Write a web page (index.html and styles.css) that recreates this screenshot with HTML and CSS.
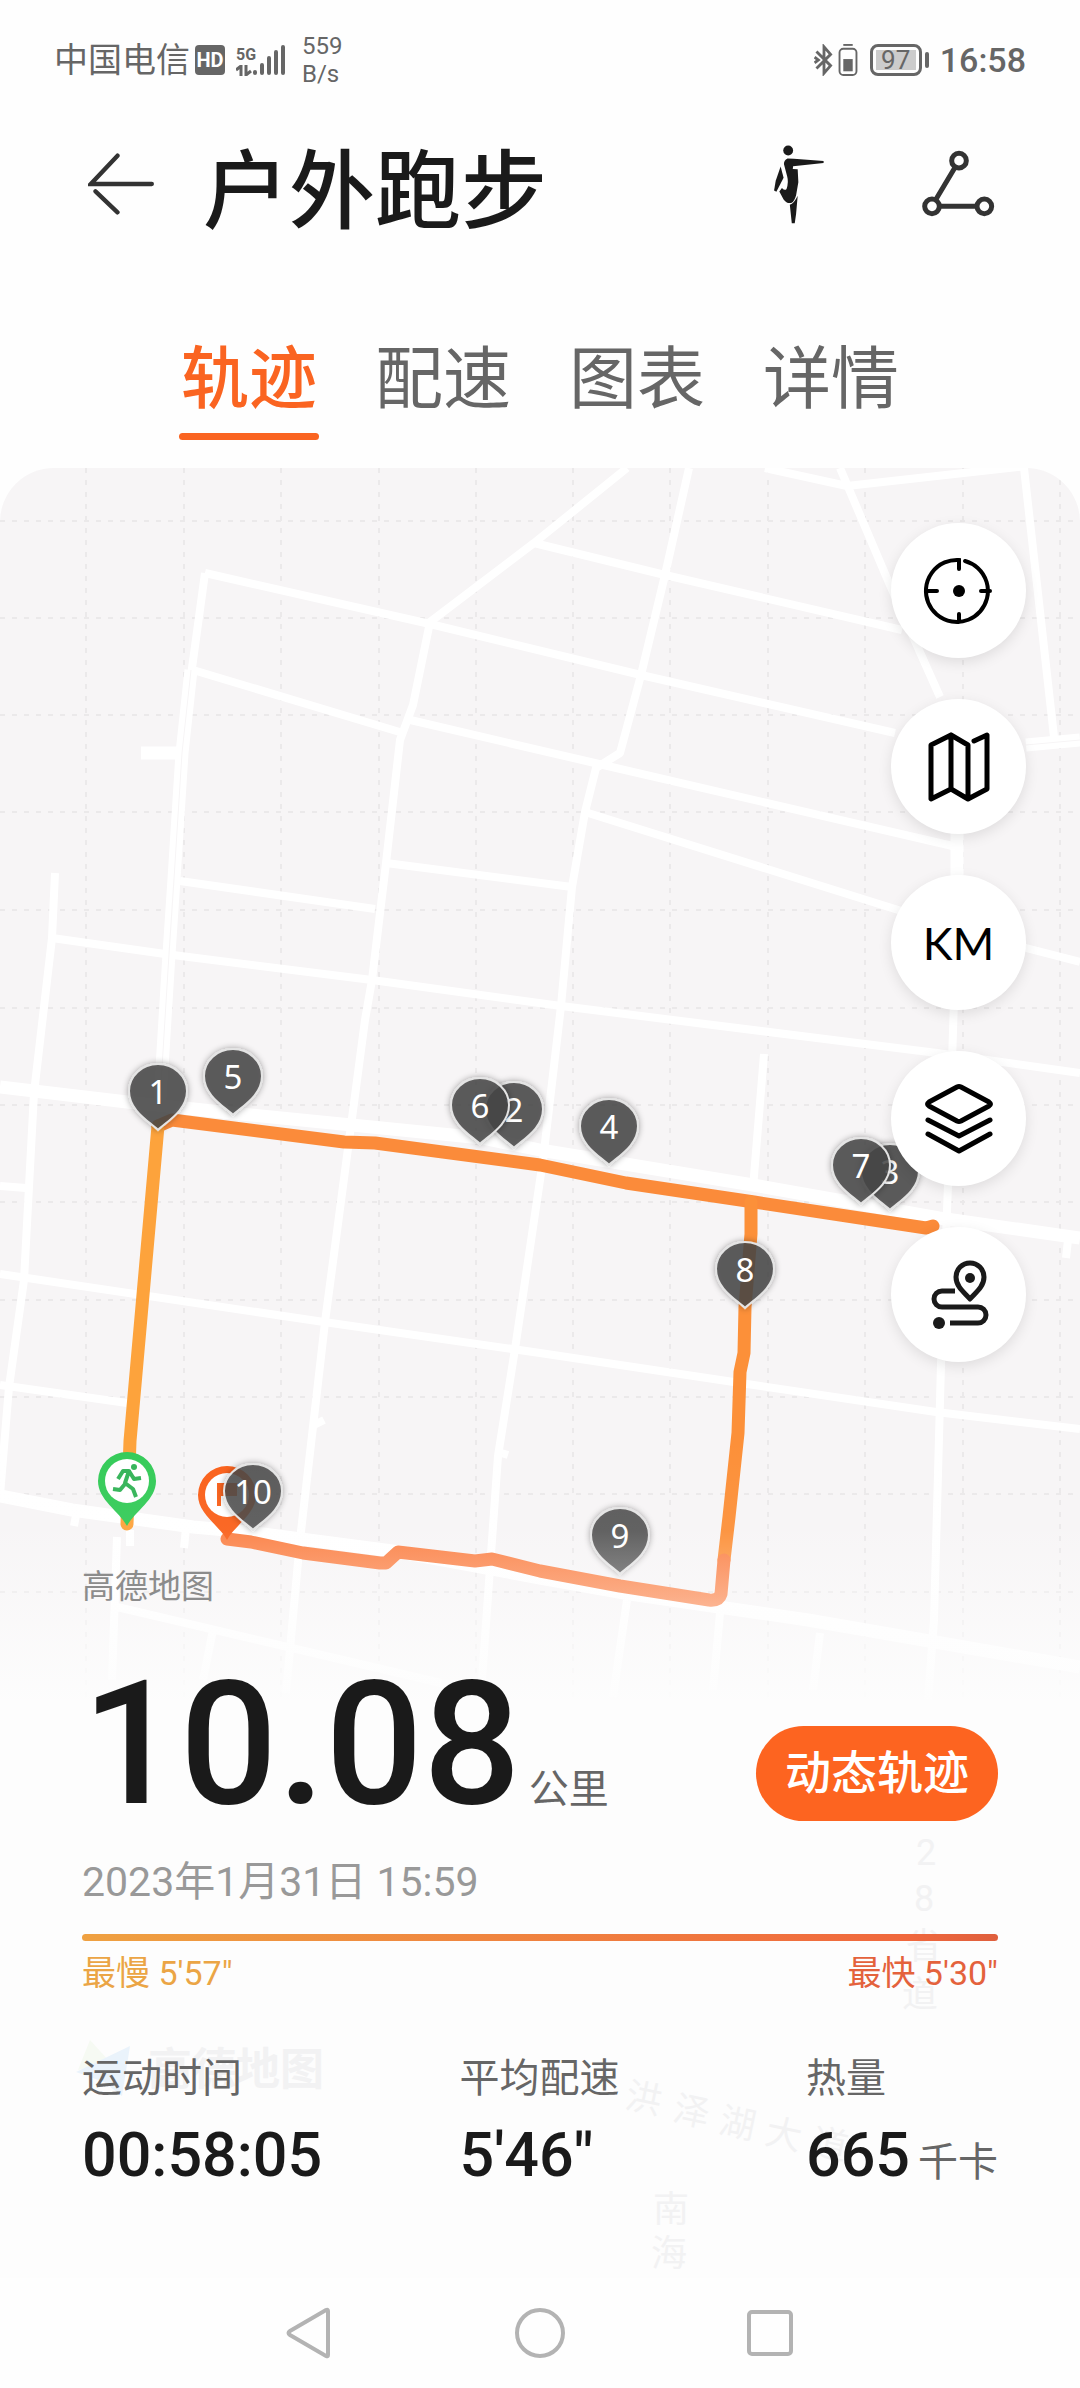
FILE: index.html
```html
<!DOCTYPE html>
<html lang="zh-CN">
<head>
    <meta charset="UTF-8">
    <meta name="viewport" content="width=device-width, initial-scale=1.0">
    <title>户外跑步</title>
    <link rel="stylesheet" href="styles.css">
</head>
<body>
    <div class="status-bar">
        <div class="status-left">
            <span class="carrier">中国电信</span>
            <span class="hd">HD</span>
            <div class="signal">
                <div class="signal-type">
                    <span>5G</span>
                    <svg width="16" height="11" viewBox="0 0 16 11" fill="none" stroke="#666" stroke-width="3"><path d="M0 5L5 1V11M10 0V10L15 6"/></svg>
                </div>
                <svg width="34" height="32" viewBox="0 0 34 32" stroke="#666" stroke-width="4" stroke-linecap="round"><path d="M3 28V29M10 21V29M17 14V29M24 8V29M31 3V29"/></svg>
            </div>
            <div class="speed">559<br>B/s</div>
        </div>
        <div class="status-right">
            <svg width="20" height="32" viewBox="0 0 20 34" fill="none" stroke="#666" stroke-width="3"><path d="M2 8L17 23L10 31V3L17 11L2 26M0 14L4 17L0 20"/></svg>
            <svg width="20" height="32" viewBox="0 0 20 34" fill="none" stroke="#666" stroke-width="2"><path d="M5 1H15"/><rect x="1" y="5" width="18" height="28" rx="4"/><path d="M5 16H15V29H5Z" fill="#666" stroke="none"/></svg>
            <div class="battery"><span>97</span></div>
            <span class="clock">16:58</span>
        </div>
    </div>

    <header class="header">
        <button class="icon-btn" aria-label="返回">
            <svg width="67" height="62" viewBox="148 400 200 186" fill="none" stroke="#333" stroke-width="13" stroke-linecap="round"><path d="M339 493H156L236 408M170 515L236 578"/></svg>
        </button>
        <h1>户外跑步</h1>
        <button class="icon-btn stretch" aria-label="拉伸">
            <svg width="54" height="82" viewBox="670 430 162 250" fill="#1a1a1a">
                <circle cx="718" cy="453" r="15"/>
                <path d="M716 477Q705 482 705 494L715 532Q720 549 713 570Q708 577 699 567L691 578L704 602Q715 617 729 612Q737 607 742 590L749 550L747 510L732 509L733 501L826 491V485L735 478Z"/>
                <path d="M695 502L704 536L682 579L675 575L680 545Z"/>
                <path d="M747 591L742 647L738 675H729L723 618Q736 615 747 591Z"/>
            </svg>
        </button>
        <button class="icon-btn" aria-label="分享">
            <svg width="76" height="68" viewBox="1100 450 224 204" fill="none" stroke="#333" stroke-width="15"><circle cx="1215" cy="482" r="22"/><circle cx="1134" cy="619" r="22"/><circle cx="1291" cy="619" r="22"/><path d="M1202 504L1146 598M1158 619H1267"/></svg>
        </button>
    </header>

    <nav class="tabs">
        <a href="#track" class="active">轨迹</a>
        <a href="#pace">配速</a>
        <a href="#chart">图表</a>
        <a href="#detail">详情</a>
    </nav>

    <main class="track" id="track">
        <svg class="map" viewBox="0 468 1080 1810" preserveAspectRatio="xMidYMin slice">
            <defs>
                <linearGradient id="fade" x1="0" y1="0" x2="0" y2="1">
                    <stop offset="0" stop-color="#fdfdfd" stop-opacity="0"/>
                    <stop offset="0.35" stop-color="#fdfdfd" stop-opacity="0.05"/>
                    <stop offset="0.6" stop-color="#fdfdfd" stop-opacity="0.35"/>
                    <stop offset="1" stop-color="#fdfdfd" stop-opacity="0.95"/>
                </linearGradient>
                <filter id="shadow" x="-30%" y="-30%" width="160%" height="160%">
                    <feDropShadow dx="0" dy="0" stdDeviation="3" flood-opacity="0.4"/>
                </filter>
                <path id="pin" d="M0 -2C-8 -10 -29 -21 -29 -41A29 27 0 0 1 29 -41C29 -21 8 -10 0 -2Z"/>
                <path id="place" d="M0 0C-8 -15 -29 -26 -29 -45A29 29 0 0 1 29 -45C29 -26 8 -15 0 0Z"/>
            </defs>

            <!-- grid -->
            <g class="grid">
                <path d="M86 468V1700M184 468V1700M281 468V1700M379 468V1700M476 468V1700M573 468V1700M670 468V1700M768 468V1700M865 468V1700M963 468V1700M1060 468V1700"/>
                <path d="M0 521H1080M0 618H1080M0 715H1080M0 812H1080M0 910H1080M0 1008H1080M0 1105H1080M0 1202H1080M0 1300H1080M0 1397H1080M0 1494H1080M0 1592H1080"/>
            </g>

            <!-- roads -->
            <g class="roads">
                <path d="M627 468L534 543L430 622L413 705L400 740L386 863L372 980L365 1020L325 1322L300 1540L286 1693"/>
                <path d="M689 468L665 575L641 675L620 753L596 768L585 812L572 887L561 1006L543 1160L515 1349L498 1456L482 1680"/>
                <path d="M205 573L430 624L641 675L895 733"/>
                <path d="M534 543L665 575L902 630"/>
                <path d="M193 670L403 733"/>
                <path d="M406 719L599 764L957 847"/>
                <path d="M585 812L895 909L1026 948L1080 962"/>
                <path d="M180 881L375 909M386 863L572 887"/>
                <path d="M55 873L52 938L34 1093L24 1280L9 1387L0 1495"/>
                <path d="M52 938L165 954L372 980L561 1006L937 1053L1080 1073"/>
                <path d="M765 468L847 486L1026 466M840 468L889 583L940 697"/>
                <path d="M1024 468L1054 737"/>
                <path d="M205 573L189 690"/>
                <path d="M954 1000L948 1185L941 1364L934 1620L926 1727"/>
                <path d="M764 1054L753 1188"/>
                <path d="M0 1186L26 1188M0 1274L324 1322L540 1353L747 1384L936 1412L1080 1429"/>
                <path d="M0 1385L127 1403"/>
                <path d="M324 1420L312 1426M498 1452L508 1455M1068 1240L1066 1258"/>
                <path d="M117 1537L112 1680M213 1630L203 1680M117 1607L441 1683"/>
                <path d="M627 1600L613 1697M720 1613L713 1690M820 1633L813 1690"/>
                <path d="M77 1510L74 1526M130 1530V1546M186 1528L184 1548"/>
            </g>
            <g class="roads wide">
                <path d="M191 670L182 753L174 879L169 954L160 1100M141 753H180"/>
                <path d="M957 740V1000M1026 745L1080 740"/>
                <path d="M0 1087L127 1102L241 1114L482 1138L540 1150L753 1185L939 1218L1080 1238"/>
                <path d="M0 1496L72 1510L193 1527L248 1532L400 1552L540 1578L630 1594L808 1620L964 1647L1080 1667"/>
            </g>
            <path class="lane" d="M191 670L182 753L174 879L169 954L160 1100M1026 745L1080 740"/>

            <!-- running route -->
            <g class="route">
                <path stroke="#fb8b3a" d="M158 1126L172 1120L344 1142L375 1143L540 1165L626 1183L754 1202L926 1228L933 1226"/>
                <path stroke="#fda33c" d="M127 1524L130 1441L158 1126"/>
                <path stroke="#fc9039" d="M751 1202V1234L745 1307L744 1353L740 1372L738 1433L729 1517L724 1560"/>
                <path stroke="#fb8146" d="M724 1560L721 1594Q719 1601 709 1600L620 1586L540 1571L492 1559L475 1561L398 1552L386 1563H380L303 1553L251 1542L227 1539"/>
            </g>

            <!-- finish and start -->
            <g transform="translate(227 1540)">
                <use href="#place" fill="#fa611b"/>
                <circle cy="-45" r="22" fill="#fff"/>
                <path d="M-10 -57V-34H-6V-44H10V-57Z" fill="#fa611b"/>
            </g>
            <g transform="translate(127 1526)">
                <use href="#place" fill="#35cb59"/>
                <circle cy="-45" r="22" fill="#fff"/>
                <circle cx="7" cy="-59" r="3" fill="#35b459"/>
                <path d="M-9 -47L-4 -55H2L-2 -43L6 -37L9 -29M-14 -37L-7 -36L-2 -42M2 -55L7 -47L14 -48" fill="none" stroke="#35b459" stroke-width="4" stroke-linejoin="round"/>
            </g>

            <!-- kilometre markers -->
            <g class="marker" transform="translate(158 1132)"><use href="#pin"/><text y="-28">1</text></g>
            <g class="marker" transform="translate(233 1117)"><use href="#pin"/><text y="-28">5</text></g>
            <g class="marker" transform="translate(514 1150)"><use href="#pin"/><text y="-28">2</text></g>
            <g class="marker" transform="translate(480 1146)"><use href="#pin"/><text y="-28">6</text></g>
            <g class="marker" transform="translate(609 1167)"><use href="#pin"/><text y="-28">4</text></g>
            <g class="marker" transform="translate(890 1212)"><use href="#pin"/><text y="-28">3</text></g>
            <g class="marker" transform="translate(861 1206)"><use href="#pin"/><text y="-28">7</text></g>
            <g class="marker" transform="translate(745 1310)"><use href="#pin"/><text y="-28">8</text></g>
            <g class="marker" transform="translate(620 1576)"><use href="#pin"/><text y="-28">9</text></g>
            <g class="marker" transform="translate(253 1532)"><use href="#pin"/><text y="-28">10</text></g>

            <rect y="1440" width="1080" height="260" fill="url(#fade)"/>
            <rect y="1700" width="1080" height="800" fill="#fdfdfd"/>

            <!-- road names and map logo under the panel -->
            <path d="M90 2040L78 2070L110 2062Z" fill="#f6faf3"/>
            <path d="M76 2072L130 2046L122 2096L104 2082Z" fill="#eaf3fb"/>
            <g class="road-names">
                <text x="926" y="1865">2</text>
                <text x="924" y="1911">8</text>
                <text x="924" y="1959">省</text>
                <text x="920" y="2007">道</text>
                <text x="644" y="2111" transform="rotate(12 644 2097)">洪</text>
                <text x="692" y="2124" transform="rotate(12 692 2110)">泽</text>
                <text x="738" y="2136" transform="rotate(12 738 2122)">湖</text>
                <text x="784" y="2147" transform="rotate(12 784 2133)">大</text>
                <text x="830" y="2157" transform="rotate(12 830 2143)">道</text>
                <text x="671" y="2222">南</text>
                <text x="669" y="2266">海</text>
                <text class="logo-text" x="236" y="2085">高德地图</text>
            </g>
        </svg>

        <div class="map-tools">
            <button aria-label="定位">
                <svg width="72" height="72" viewBox="0 0 72 72" fill="none" stroke="#000" stroke-width="4" stroke-linecap="round"><path d="M42 6A31 31 0 1 1 36 5V14M36 67V59M5 36H14M67 36H58"/><circle cx="36" cy="36" r="6" fill="#000" stroke="none"/></svg>
            </button>
            <button aria-label="地图类型">
                <svg width="72" height="72" viewBox="0 0 72 72" fill="none" stroke="#000" stroke-width="5" stroke-linejoin="round" stroke-linecap="round"><path d="M51 10L64 4V58L45 68L28 58L8 68V14L28 4L45 14V68M28 4V58"/></svg>
            </button>
            <button class="km">KM</button>
            <button aria-label="图层">
                <svg width="72" height="72" viewBox="0 0 72 72" fill="none" stroke="#000" stroke-width="5" stroke-linejoin="round" stroke-linecap="round"><path d="M34 4Q36 3 38 4L66 19Q69 21 66 23L38 38Q36 39 34 38L6 23Q3 21 6 19ZM5 37L36 53L67 37M5 51L36 68L67 51"/></svg>
            </button>
            <button aria-label="路线">
                <svg width="72" height="72" viewBox="0 0 72 72" fill="none" stroke="#1a1a1a" stroke-width="5" stroke-linejoin="round"><path d="M47 40C42 34 33 28 33 18A14 14 0 0 1 61 18C61 28 52 34 47 40ZM32 32H19A8 8 0 0 0 19 48H55A8 8 0 0 1 55 64H27"/><g fill="#1a1a1a" stroke="none"><circle cx="47" cy="19" r="5"/><circle cx="16" cy="64" r="6"/></g></svg>
            </button>
        </div>

        <p class="map-source">高德地图</p>

        <section class="summary">
            <div class="distance-row">
                <p class="distance">10.08<span>公里</span></p>
                <button class="play-btn">动态轨迹</button>
            </div>
            <p class="date">2023年1月31日 15:59</p>
            <div class="pace-bar"></div>
            <div class="pace-range">
                <span class="slow">最慢 5'57"</span>
                <span class="fast">最快 5'30"</span>
            </div>
            <dl class="stats">
                <div>
                    <dt>运动时间</dt>
                    <dd>00:58:05</dd>
                </div>
                <div>
                    <dt>平均配速</dt>
                    <dd>5'46"</dd>
                </div>
                <div>
                    <dt>热量</dt>
                    <dd>665<span>千卡</span></dd>
                </div>
            </dl>
        </section>
    </main>

    <div class="nav-bar">
        <button aria-label="后退"><svg width="52" height="52" viewBox="0 0 52 52"><path d="M44 4V48Q44 50 42 49L6 28Q3 26 6 24L42 3Q44 2 44 4Z"/></svg></button>
        <button aria-label="主页"><svg width="52" height="52" viewBox="0 0 52 52"><circle cx="26" cy="26" r="23"/></svg></button>
        <button aria-label="最近任务"><svg width="52" height="52" viewBox="0 0 52 52"><rect x="5" y="5" width="42" height="42" rx="3"/></svg></button>
    </div>
</body>
</html>
```
FILE: styles.css
```css
* {
    box-sizing: border-box;
}
body {
    margin: 0;
    min-height: 100vh;
    display: flex;
    flex-direction: column;
    background-color: #fefefe;
    color: #1a1a1a;
    font-family: Roboto, 'Noto Sans CJK SC', sans-serif;
}
p, h1, dl, dd {
    margin: 0;
}
button {
    font-family: inherit;
    border: none;
    background: none;
    padding: 0;
    cursor: pointer;
}
svg {
    display: block;
}

/* status bar */
.status-bar {
    display: flex;
    justify-content: space-between;
    align-items: center;
    height: 120px;
    padding: 0 54px;
    color: #666;
}
.status-left, .status-right {
    display: flex;
    align-items: center;
}
.carrier {
    font-size: 34px;
    line-height: 40px;
}
.hd {
    width: 30px;
    height: 30px;
    margin: 0 11px 0 5px;
    border-radius: 4px;
    background-color: #666;
    color: #fff;
    font-size: 20px;
    font-weight: bold;
    line-height: 30px;
    text-align: center;
}
.signal {
    display: flex;
    align-items: flex-end;
}
.signal-type {
    width: 16px;
    font-size: 16px;
    font-weight: bold;
    line-height: 20px;
}
.speed {
    margin-left: 16px;
    font-size: 24px;
    line-height: 28px;
}
.status-right {
    gap: 4px;
}
.battery {
    position: relative;
    width: 52px;
    height: 32px;
    margin: 0 14px 0 8px;
    padding: 3px;
    border: 3px solid #666;
    border-radius: 8px;
}
.battery::after {
    content: "";
    position: absolute;
    top: 5px;
    right: -10px;
    width: 4px;
    height: 16px;
    border-radius: 2px;
    background-color: #666;
}
.battery span {
    display: block;
    background-color: #ccc;
    font-size: 26px;
    line-height: 20px;
    text-align: center;
}
.clock {
    font-size: 34px;
    font-weight: 500;
}

/* header */
.header {
    display: flex;
    align-items: center;
    height: 128px;
    padding: 0 84px 0 88px;
}
.header h1 {
    flex: 1;
    margin-left: 48px;
    padding-top: 18px;
    font-size: 86px;
    font-weight: 500;
    line-height: 110px;
}
.stretch {
    margin-right: 94px;
}

/* tabs */
.tabs {
    display: flex;
    justify-content: center;
    gap: 54px;
    padding: 83px 0 28px;
}
.tabs a {
    width: 140px;
    padding-bottom: 3px;
    border-bottom: 7px solid transparent;
    color: #666;
    font-size: 68px;
    line-height: 99px;
    text-align: center;
    text-decoration: none;
    position: relative;
}
.tabs .active {
    color: #fa6421;
    font-weight: 500;
}
.tabs .active::after {
    content: "";
    position: absolute;
    left: 0;
    right: 0;
    bottom: -7px;
    height: 7px;
    border-radius: 4px;
    background-color: #fa6421;
}

/* map */
.track {
    position: relative;
    flex: 1;
    overflow: hidden;
    border-radius: 54px 54px 0 0;
    background-color: #f7f5f6;
}
.map {
    position: absolute;
    top: 0;
    left: 0;
    width: 100%;
    height: 100%;
}
.grid {
    fill: none;
    stroke: #ebe9ea;
    stroke-width: 2;
    stroke-dasharray: 5 7;
}
.roads {
    fill: none;
    stroke: #fff;
    stroke-width: 8;
    stroke-linejoin: round;
}
.wide {
    stroke-width: 13;
}
.lane {
    fill: none;
    stroke: #f7f5f6;
    stroke-width: 1;
}
.route {
    fill: none;
    stroke-width: 13;
    stroke-linecap: round;
    stroke-linejoin: round;
}
.marker use {
    fill: rgba(70, 69, 69, 0.82);
    stroke: #e4e4e4;
    stroke-width: 2;
    filter: url(#shadow);
}
.marker text {
    fill: #fff;
    font-family: 'Noto Sans', sans-serif;
    font-size: 33px;
    text-anchor: middle;
}
.road-names {
    fill: #f2f2f3;
    font-size: 36px;
    text-anchor: middle;
}
.logo-text {
    font-size: 44px;
    font-weight: bold;
}
.map-tools {
    position: relative;
    display: flex;
    flex-direction: column;
    align-items: flex-end;
    gap: 41px;
    padding: 55px 54px 0;
}
.map-tools button {
    display: flex;
    align-items: center;
    justify-content: center;
    width: 135px;
    height: 135px;
    border-radius: 50%;
    background-color: #fff;
    box-shadow: 0 4px 14px rgba(0, 0, 0, 0.1);
}
.map-tools .km {
    color: #000;
    font-family: Lato, sans-serif;
    font-size: 45px;
}
.map-source {
    position: relative;
    margin: 205px 82px 51px;
    color: #8c8c8c;
    font-size: 33px;
    line-height: 40px;
}

/* summary */
.summary {
    position: relative;
    padding: 0 82px 91px;
}
.distance-row {
    display: flex;
    justify-content: space-between;
    align-items: flex-end;
}
.distance {
    display: flex;
    align-items: baseline;
    height: 172px;
    font-size: 172px;
    font-weight: 500;
    line-height: 172px;
}
.distance span {
    margin-left: 8px;
    color: #666;
    font-size: 40px;
    font-weight: 400;
    line-height: 48px;
}
.play-btn {
    margin-bottom: 9px;
    padding: 0 29px;
    border-radius: 48px;
    background-color: #fd6420;
    color: #fff;
    font-size: 46px;
    font-weight: 500;
    line-height: 95px;
}
.date {
    margin-top: 28px;
    color: #999;
    font-size: 41px;
    line-height: 48px;
}
.pace-bar {
    height: 7px;
    margin-top: 28px;
    border-radius: 4px;
    background: linear-gradient(to right, #efa141, #f0683d 90%, #df5f3d);
}
.pace-range {
    display: flex;
    justify-content: space-between;
    margin-top: 12px;
    font-size: 34px;
    line-height: 40px;
}
.slow {
    color: #eba545;
}
.fast {
    color: #e4623c;
}
.stats {
    display: grid;
    grid-template-columns: 378fr 347fr auto;
    margin-top: 62px;
}
.stats dt {
    color: #666;
    font-size: 40px;
    line-height: 48px;
}
.stats dd {
    display: flex;
    align-items: baseline;
    height: 64px;
    margin-top: 20px;
    font-size: 61px;
    font-weight: 500;
    line-height: 64px;
}
.stats dd span {
    margin-left: 8px;
    color: #666;
    font-size: 40px;
    font-weight: 400;
    line-height: 48px;
}

/* system navigation */
.nav-bar {
    display: flex;
    justify-content: center;
    align-items: center;
    gap: 178px;
    height: 110px;
}
.nav-bar svg {
    fill: none;
    stroke: #b3b3b3;
    stroke-width: 4;
}
```
